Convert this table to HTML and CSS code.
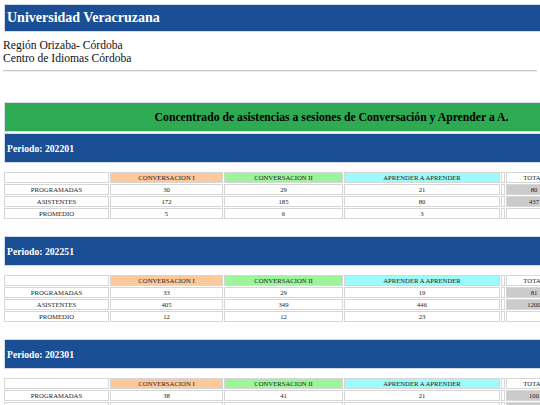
FILE: index.html
```html
<!DOCTYPE html>
<html lang="es">
<head>
  <meta charset="UTF-8">
  <meta name="viewport" content="width=device-width, initial-scale=1.0">
  <title>Concentrado de asistencias</title>
  <link rel="stylesheet" href="styles.css">
</head>
<body>
  <div class="page">
    <div class="bar site-header">
      <div class="bar-inner">Universidad Veracruzana</div>
    </div>

    <div class="campus">
      Región Orizaba- Córdoba<br>
      Centro de Idiomas Córdoba
    </div>
    <hr>

    <div class="report">
      <div class="bar report-title">
        <div class="bar-inner">Concentrado de asistencias a sesiones de Conversación y Aprender a A.</div>
      </div>

      <div class="period">
        <div class="bar period-bar">
          <div class="bar-inner">Periodo: 202201</div>
        </div>
        <table class="stats">
          <tr>
            <th class="col-label"></th>
            <th class="col-c1 conv1">CONVERSACION I</th>
            <th class="col-c2 conv2">CONVERSACION II</th>
            <th class="col-aa aprender">APRENDER A APRENDER</th>
            <th class="col-sep"></th>
            <th class="col-total">TOTAL</th>
          </tr>
          <tr>
            <td>PROGRAMADAS</td><td>30</td><td>29</td><td>21</td><td></td><td class="sum">80</td>
          </tr>
          <tr>
            <td>ASISTENTES</td><td>172</td><td>185</td><td>80</td><td></td><td class="sum">437</td>
          </tr>
          <tr>
            <td>PROMEDIO</td><td>5</td><td>6</td><td>3</td><td></td><td></td>
          </tr>
        </table>
      </div>

      <div class="period">
        <div class="bar period-bar">
          <div class="bar-inner">Periodo: 202251</div>
        </div>
        <table class="stats">
          <tr>
            <th class="col-label"></th>
            <th class="col-c1 conv1">CONVERSACION I</th>
            <th class="col-c2 conv2">CONVERSACION II</th>
            <th class="col-aa aprender">APRENDER A APRENDER</th>
            <th class="col-sep"></th>
            <th class="col-total">TOTAL</th>
          </tr>
          <tr>
            <td>PROGRAMADAS</td><td>33</td><td>29</td><td>19</td><td></td><td class="sum">81</td>
          </tr>
          <tr>
            <td>ASISTENTES</td><td>405</td><td>349</td><td>446</td><td></td><td class="sum">1200</td>
          </tr>
          <tr>
            <td>PROMEDIO</td><td>12</td><td>12</td><td>23</td><td></td><td></td>
          </tr>
        </table>
      </div>

      <div class="period">
        <div class="bar period-bar">
          <div class="bar-inner">Periodo: 202301</div>
        </div>
        <table class="stats">
          <tr>
            <th class="col-label"></th>
            <th class="col-c1 conv1">CONVERSACION I</th>
            <th class="col-c2 conv2">CONVERSACION II</th>
            <th class="col-aa aprender">APRENDER A APRENDER</th>
            <th class="col-sep"></th>
            <th class="col-total">TOTAL</th>
          </tr>
          <tr>
            <td>PROGRAMADAS</td><td>38</td><td>41</td><td>21</td><td></td><td class="sum">100</td>
          </tr>
          <tr>
            <td>ASISTENTES</td><td>616</td><td>242</td><td>311</td><td></td><td class="sum">1169</td>
          </tr>
          <tr>
            <td>PROMEDIO</td><td>16</td><td>5</td><td>14</td><td></td><td></td>
          </tr>
        </table>
      </div>
    </div>
  </div>
</body>
</html>
```

FILE: styles.css
```css
body {
  font-family: "Liberation Serif", "Times New Roman", serif;
  margin: 3px 0 0 3px;
  background-color: white;
  color: #111;
}

.page {
  overflow: hidden;
}

/* Bars with the light table-like frame */
.bar {
  width: 653px;
  margin-left: 1px;
  border: 1px solid #d3dce8;
}

.bar-inner {
  height: 28px;
  display: flex;
  align-items: center;
  padding-left: 2px;
  font-weight: bold;
}

.site-header {
  margin-top: 1px;
}

.site-header .bar-inner {
  height: 26px;
  background-color: #1a4f96;
  color: white;
  font-size: 14px;
}

.campus {
  margin-top: 7px;
  font-size: 11.6px;
  line-height: 13px;
}

hr {
  width: 534px;
  margin: 5px 0 0;
  border: 0;
  border-top: 1px solid #c9c9c9;
  border-bottom: 1px solid #ececec;
}

.report {
  margin-top: 30px;
}

.report-title {
  margin-bottom: 1px;
}

.report-title .bar-inner {
  justify-content: center;
  padding-left: 0;
  background-color: #2eaa52;
  color: #000;
  font-size: 11.7px;
}

.period-bar .bar-inner {
  background-color: #1a4f96;
  color: white;
  font-size: 9.7px;
}

.period {
  margin-bottom: 16px;
}

.period-bar {
  margin-bottom: 8px;
}

/* Attendance tables */
.stats {
  width: 560px;
  table-layout: fixed;
  border-collapse: separate;
  border-spacing: 1px;
  font-size: 6.7px;
  color: #222;
}

.stats th,
.stats td {
  box-sizing: border-box;
  height: 11px;
  padding: 0;
  border: 1px solid #d6d6d6;
  text-align: center;
  font-weight: normal;
  line-height: 9px;
  background-color: white;
  white-space: nowrap;
}

.col-label { width: 105px; }
.col-c1 { width: 113px; }
.col-c2 { width: 119px; }
.col-aa { width: 156px; }
.col-sep { width: 4px; }
.col-total { width: 56px; }

.stats th.conv1 { background-color: #fdc99b; }
.stats th.conv2 { background-color: #9cf59a; }
.stats th.aprender { background-color: #9dfbfb; }
.stats td.sum { background-color: #cbcbcb; }
```
